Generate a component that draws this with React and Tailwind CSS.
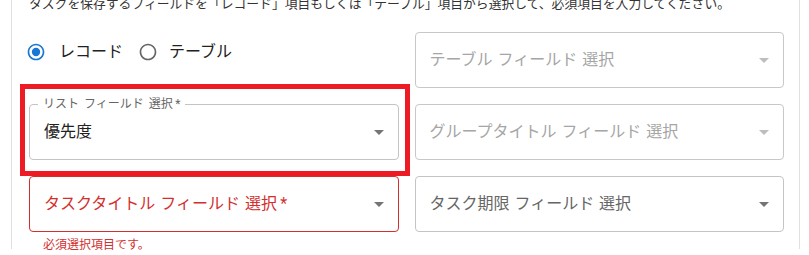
import React from "react";

function Arrow({ color }) {
  return (
    <svg width="24" height="24" viewBox="0 0 24 24" className="shrink-0">
      <path d="M7 10l5 5 5-5z" fill={color} />
    </svg>
  );
}

function RadioIcon({ checked }) {
  return (
    <svg width="20" height="20" viewBox="0 0 24 24" className="shrink-0">
      <path
        d="M12 2C6.48 2 2 6.48 2 12s4.48 10 10 10 10-4.48 10-10S17.52 2 12 2zm0 18c-4.42 0-8-3.58-8-8s3.58-8 8-8 8 3.58 8 8-3.58 8-8 8z"
        fill={checked ? "#1976d2" : "#666666"}
      />
      {checked && <circle cx="12" cy="12" r="5" fill="#1976d2" />}
    </svg>
  );
}

function SelectBox({ children, border = "border-[#c4c4c4]", arrow = "#757575", notchLabel }) {
  return (
    <div className={`relative h-14 rounded-[4px] border ${border} flex items-center justify-between pl-[14px] pr-[7px]`}>
      {notchLabel && (
        <span className="absolute -top-[9px] left-[8px] px-[5px] bg-white text-[12px] leading-[16px] text-[#666666] whitespace-nowrap [word-spacing:2px]">
          {notchLabel}
        </span>
      )}
      <div className="text-[16px] leading-[24px] whitespace-nowrap">{children}</div>
      <Arrow color={arrow} />
    </div>
  );
}

export default function App() {
  return (
    <div className="relative w-[809px] h-[255px] overflow-hidden bg-white font-['Roboto','Noto_Sans_CJK_JP',sans-serif]">
      <div className="ml-[11px] w-[789px] h-[255px] border-x border-[#e0e0e0] pl-[17px] pr-[15px]">
        <p className="-mt-[6px] h-[20px] text-[12.8px] leading-[20px] text-[#333333] whitespace-nowrap">
          タスクを保存するフィールドを「レコード」項目もしくは「テーブル」項目から選択して、必須項目を入力してください。
        </p>
        <div className="mt-[18px] grid grid-cols-2 gap-x-4 gap-y-4 items-start">
          <div className="flex items-center h-[40px] text-[16px] text-[#212121]">
            <div className="-ml-[3px]">
              <RadioIcon checked />
            </div>
            <span className="ml-[13px]">レコード</span>
            <div className="ml-[15px]">
              <RadioIcon />
            </div>
            <span className="ml-[11px]">テーブル</span>
          </div>
          <SelectBox border="border-[#c8c8c8]" arrow="#bdbdbd">
            <span className="text-[#a6a6a6] [word-spacing:1px]">テーブル フィールド 選択</span>
          </SelectBox>

          <SelectBox notchLabel={"リスト フィールド 選択\u2009*"}>
            <span className="text-[#212121]">優先度</span>
          </SelectBox>
          <SelectBox border="border-[#c8c8c8]" arrow="#bdbdbd">
            <span className="text-[#a6a6a6] [word-spacing:1px]">グループタイトル フィールド 選択</span>
          </SelectBox>

          <div>
            <SelectBox border="border-[#d32f2f]">
              <span className="text-[#d32f2f] [word-spacing:1px]">{"タスクタイトル フィールド 選択\u2009*"}</span>
            </SelectBox>
            <p className="mt-[3px] ml-[14px] text-[12px] leading-[20px] text-[#d32f2f]">必須選択項目です。</p>
          </div>
          <SelectBox>
            <span className="text-[#666666] [word-spacing:1px]">タスク期限 フィールド 選択</span>
          </SelectBox>
        </div>
      </div>
      <div className="pointer-events-none absolute left-[20px] top-[84px] w-[390px] h-[92px] border-[5px] border-[#ed1c24]" />
    </div>
  );
}
